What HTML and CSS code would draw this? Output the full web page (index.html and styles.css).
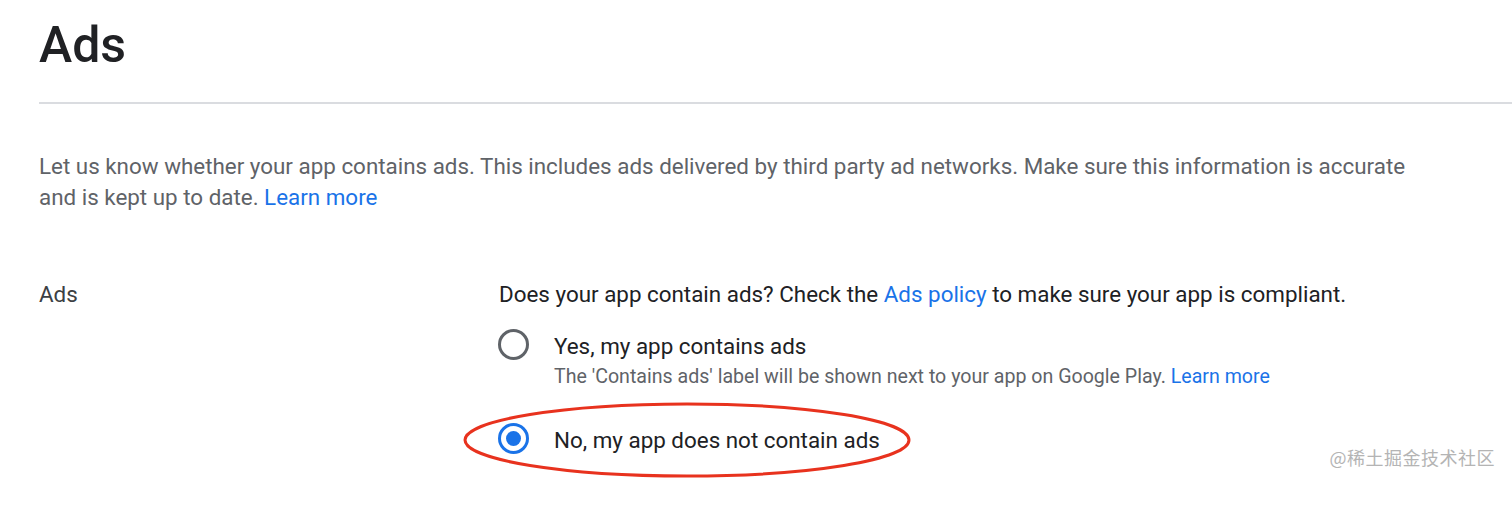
FILE: index.html
```html
<!DOCTYPE html>
<html lang="en">
<head>
<meta charset="utf-8">
<title>Ads</title>
<link rel="stylesheet" href="styles.css">
</head>
<body>
<div class="page">
  <h1 class="title">Ads</h1>
  <div class="divider"></div>
  <p class="intro">Let us know whether your app contains ads. This includes ads delivered by third party ad networks. Make sure this information is accurate and is kept up to date. <a class="link" href="#">Learn more</a></p>

  <div class="field">
    <div class="field-label">Ads</div>
    <div class="field-body">
      <div class="question">Does your app contain ads? Check the <a class="link" href="#">Ads policy</a> to make sure your app is compliant.</div>

      <div class="option option-yes">
        <span class="radio"></span>
        <div class="option-text">
          <div class="option-label">Yes, my app contains ads</div>
          <div class="option-help">The 'Contains ads' label will be shown next to your app on Google Play. <a class="link" href="#">Learn more</a></div>
        </div>
      </div>

      <div class="option option-no">
        <span class="radio radio-checked"></span>
        <div class="option-text">
          <div class="option-label">No, my app does not contain ads</div>
        </div>
        <svg class="annotation" width="452" height="80" viewBox="0 0 452 80" aria-hidden="true">
          <ellipse cx="226" cy="40" rx="222" ry="36" fill="none" stroke="#e8321e" stroke-width="3"/>
        </svg>
      </div>
    </div>
  </div>

  <div class="watermark">@稀土掘金技术社区</div>
</div>
</body>
</html>
```

FILE: styles.css
```css
html, body {
  margin: 0;
  padding: 0;
  background: #ffffff;
}

body {
  font-family: Roboto, "Liberation Sans", "Noto Sans CJK SC", sans-serif;
  color: #3c4043;
  width: 1512px;
  height: 507px;
  overflow: hidden;
}

.page {
  position: relative;
  padding-left: 39px;
  height: 507px;
  box-sizing: border-box;
}

.title {
  margin: 15px 0 0;
  font-size: 50px;
  line-height: 60px;
  font-weight: 500;
  color: #202124;
  letter-spacing: 0;
}

.divider {
  margin-top: 27px;
  height: 1.5px;
  background: #dadce0;
}

.intro {
  margin: 47px 0 0;
  width: 1390px;
  font-size: 22.4px;
  line-height: 31px;
  color: #5f6368;
}

.link {
  color: #1a73e8;
  text-decoration: none;
}

.field {
  display: flex;
  margin-top: 66px;
}

.field-label {
  width: 460px;
  flex: none;
  font-size: 22.4px;
  line-height: 31px;
  color: #3c4043;
}

.field-body {
  display: flex;
  flex-direction: column;
}

.question {
  font-size: 22.4px;
  line-height: 31px;
  color: #202124;
}

.option {
  position: relative;
  display: flex;
  align-items: flex-start;
  gap: 25px;
}

.option-yes {
  margin-top: 21px;
}

.option-no {
  margin-top: 35px;
}

.radio {
  position: relative;
  flex: none;
  width: 31px;
  height: 31px;
  margin-left: -1px;
  margin-top: -2px;
  box-sizing: border-box;
  border: 3px solid #5f6368;
  border-radius: 50%;
}

.radio-checked {
  border-color: #1a73e8;
}

.radio-checked::before {
  content: "";
  position: absolute;
  left: 50%;
  top: 50%;
  width: 62px;
  height: 62px;
  margin: -31px 0 0 -31px;
  border-radius: 50%;
  background: #e8f0fe;
  z-index: -1;
}

.radio-checked::after {
  content: "";
  position: absolute;
  left: 50%;
  top: 50%;
  width: 15px;
  height: 15px;
  margin: -7.5px 0 0 -7.5px;
  border-radius: 50%;
  background: #1a73e8;
}

.option-label {
  font-size: 22.4px;
  line-height: 31px;
  color: #202124;
}

.option-help {
  margin-top: 1px;
  font-size: 19.6px;
  line-height: 27px;
  color: #5f6368;
}

.annotation {
  position: absolute;
  left: -38px;
  top: -25px;
  pointer-events: none;
}

.watermark {
  position: absolute;
  right: 17px;
  top: 430px;
  font-family: "Noto Sans CJK SC", sans-serif;
  font-size: 18px;
  line-height: 24px;
  letter-spacing: 0.5px;
  color: #b4b4b4;
}
```
